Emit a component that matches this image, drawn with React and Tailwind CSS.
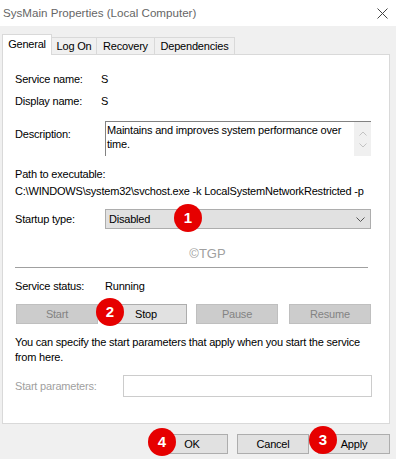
import React from 'react'

const font = { fontFamily: '"Liberation Sans", Arial, sans-serif' }

function Badge({ n, className }) {
  return (
    <div
      className={`absolute w-[28px] h-[28px] rounded-full bg-[#e60000] text-white font-bold text-[15px] tracking-normal flex items-center justify-center ${className}`}
    >
      {n}
    </div>
  )
}

function Btn({ children, disabled, className = '' }) {
  return (
    <div
      className={`h-[20px] flex items-center justify-center border ${
        disabled ? 'bg-[#cccccc] border-[#bfbfbf] text-[#838383]' : 'bg-[#e1e1e1] border-[#adadad] text-black'
      } ${className}`}
    >
      {children}
    </div>
  )
}

export default function App() {
  return (
    <div
      className="relative w-[396px] h-[459px] bg-[#f0f0f0] text-[11px] tracking-[-0.2px] text-black overflow-hidden"
      style={font}
    >
      {/* title bar */}
      <div className="h-[26px] bg-white flex items-center justify-between pl-[3px] pr-[7px]">
        <span className="text-[11.6px] tracking-normal text-[#666]">SysMain Properties (Local Computer)</span>
        <svg width="11" height="11" viewBox="0 0 11 11" className="mr-[1px]">
          <path d="M0.5 0.5 L10.5 10.5 M10.5 0.5 L0.5 10.5" stroke="#444" strokeWidth="1" fill="none" />
        </svg>
      </div>

      {/* tabs */}
      <div className="flex items-end h-[28px] pl-[2px] pt-[7px]">
        <div className="relative z-10 h-[21px] w-[50px] bg-white border border-[#d9d9d9] border-b-0 flex items-center justify-center pb-[2px] mb-[-1px]">
          General
        </div>
        <div className="h-[17px] w-[45px] bg-[#f0f0f0] border border-[#d9d9d9] border-l-0 border-b-0 flex items-center justify-center">
          Log On
        </div>
        <div className="h-[17px] w-[58px] bg-[#f0f0f0] border border-[#d9d9d9] border-l-0 border-b-0 flex items-center justify-center">
          Recovery
        </div>
        <div className="h-[17px] w-[80px] bg-[#f0f0f0] border border-[#d9d9d9] border-l-0 border-b-0 flex items-center justify-center">
          Dependencies
        </div>
      </div>

      {/* panel */}
      <div className="ml-[2px] w-[388px] h-[370px] bg-white border border-[#d9d9d9] pl-[12px] pt-[16px]">
        <div className="flex h-[16px] items-center">
          <span className="w-[86px]">Service name:</span>
          <span>S</span>
        </div>
        <div className="flex h-[16px] items-center mt-[6px]">
          <span className="w-[86px]">Display name:</span>
          <span>S</span>
        </div>

        <div className="flex mt-[12px]">
          <span className="w-[90px] pt-[5px]">Description:</span>
          <div className="flex w-[266px] h-[35px] border-t border-l border-[#828282]">
            <div className="flex-1 pl-[1px] leading-[14px] pt-[1px]">
              Maintains and improves system performance over time.
            </div>
            <div className="w-[17px] bg-[#f0f0f0] flex flex-col items-center justify-center gap-[7px]">
              <svg width="8" height="5" viewBox="0 0 8 5">
                <path d="M0.5 4.5 L4 1 L7.5 4.5" stroke="#c2c2c2" fill="none" />
              </svg>
              <svg width="8" height="5" viewBox="0 0 8 5">
                <path d="M0.5 0.5 L4 4 L7.5 0.5" stroke="#c2c2c2" fill="none" />
              </svg>
            </div>
          </div>
        </div>

        <div className="mt-[10px] h-[17px] flex items-center">Path to executable:</div>
        <div className="h-[17px] flex items-center whitespace-nowrap">
          C:\WINDOWS\system32\svchost.exe -k LocalSystemNetworkRestricted -p
        </div>

        <div className="flex items-center mt-[9px]">
          <span className="w-[90px]">Startup type:</span>
          <div className="w-[266px] h-[20px] bg-[#e1e1e1] border border-[#adadad] flex items-center justify-between pl-[3px] pr-[5px]">
            <span>Disabled</span>
            <svg width="9" height="5" viewBox="0 0 9 5">
              <path d="M0.5 0.5 L4.5 4.5 L8.5 0.5" stroke="#555" fill="none" />
            </svg>
          </div>
        </div>

        <div className="mt-[17px] h-[16px] flex items-center justify-center w-[385px] text-[13px] tracking-normal text-[#a0a0a0]">
          ©TGP
        </div>
        <div className="mt-[5px] h-px w-[353px] bg-[#a0a0a0]" />

        <div className="flex h-[16px] items-center mt-[10px]">
          <span className="w-[90px]">Service status:</span>
          <span>Running</span>
        </div>

        <div className="flex mt-[10px] ml-[1px]">
          <Btn disabled className="w-[82px]">Start</Btn>
          <Btn className="w-[82px] ml-[7px]">Stop</Btn>
          <Btn disabled className="w-[82px] ml-[9px]">Pause</Btn>
          <Btn disabled className="w-[82px] ml-[11px]">Resume</Btn>
        </div>

        <div className="mt-[11px] leading-[15px] w-[355px]">
          You can specify the start parameters that apply when you start the service from here.
        </div>

        <div className="flex items-center mt-[10px]">
          <span className="w-[108px] text-[#a0a0a0]">Start parameters:</span>
          <div className="w-[249px] h-[22px] border border-[#cccccc] bg-white" />
        </div>
      </div>

      {/* bottom buttons */}
      <div className="flex justify-end gap-[9px] pr-[6px] mt-[10px]">
        <Btn className="w-[72px]">OK</Btn>
        <Btn className="w-[72px]">Cancel</Btn>
        <Btn className="w-[72px]">Apply</Btn>
      </div>

      <Badge n="1" className="left-[174px] top-[204px]" />
      <Badge n="2" className="left-[96px] top-[298px]" />
      <Badge n="4" className="left-[148px] top-[428px]" />
      <Badge n="3" className="left-[309px] top-[426px]" />
    </div>
  )
}
